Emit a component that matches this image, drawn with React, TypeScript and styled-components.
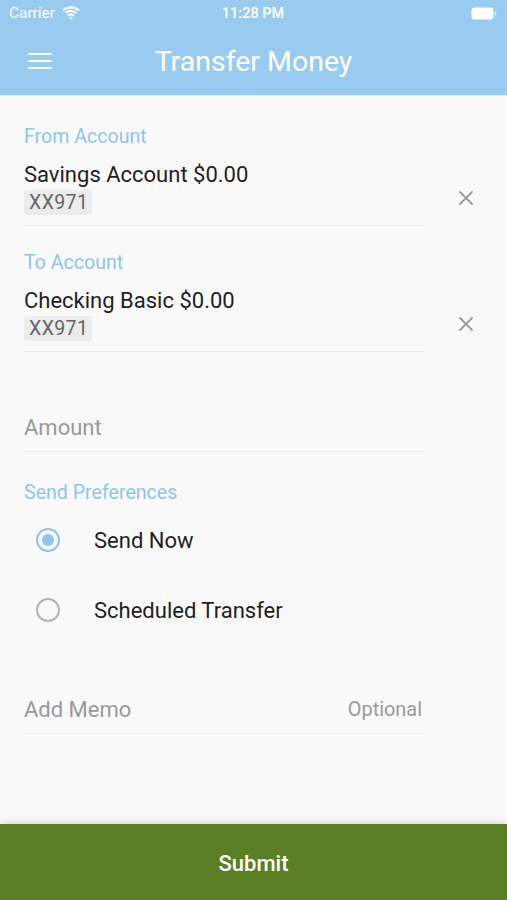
import React from "react";
import styled, { createGlobalStyle } from "styled-components";

const Global = createGlobalStyle`
  html, body { margin: 0; padding: 0; height: 100%; }
  body { font-family: Roboto, "Noto Sans", "Liberation Sans", sans-serif; background: #f9f9f9; }
  #root { height: 100%; }
`;

const Screen = styled.div`
  width: 507px;
  height: 900px;
  display: flex;
  flex-direction: column;
  background: #f9f9f9;
  overflow: hidden;
`;

const Header = styled.header`
  background: #99cbf0;
  display: flex;
  flex-direction: column;
  height: 95px;
  box-shadow: 0 1px 0 #e6eef4;
`;

const StatusBar = styled.div`
  height: 28px;
  display: grid;
  grid-template-columns: 1fr auto 1fr;
  align-items: center;
  padding: 0 10px 0 9px;
  color: #fff;
  font-size: 15.4px;
`;

const Carrier = styled.div`
  display: flex;
  align-items: center;
  gap: 7px;
  margin-top: -2px;
`;

const Time = styled.div`
  font-weight: 500;
  font-size: 14.5px;
  margin-top: -2px;
`;

const Battery = styled.div`
  justify-self: end;
  display: flex;
  align-items: center;
  margin-top: -2px;
`;

const NavBar = styled.div`
  flex: 1;
  display: grid;
  grid-template-columns: 80px 1fr 80px;
  align-items: center;
`;

const MenuButton = styled.div`
  display: flex;
  flex-direction: column;
  gap: 4.5px;
  padding-left: 28px;
  margin-top: -1px;
  span {
    display: block;
    width: 24px;
    height: 2.5px;
    border-radius: 1.5px;
    background: #fff;
  }
`;

const Title = styled.h1`
  margin: 0;
  text-align: center;
  color: #fff;
  font-weight: 400;
  font-size: 28.5px;
  margin-top: -1px;
`;

const Content = styled.main`
  flex: 1;
  padding-top: 30px;
  display: flex;
  flex-direction: column;
`;

const SectionLabel = styled.div<{ $mt?: number }>`
  margin-left: 24px;
  color: #8ec5ed;
  font-size: 19.6px;
  line-height: 24px;
  margin-top: ${(p) => p.$mt ?? 0}px;
`;

const AccountRow = styled.div`
  display: flex;
  align-items: center;
  margin-top: 13px;
`;

const AccountInfo = styled.div`
  width: 400px;
  margin-left: 24px;
  padding-bottom: 10px;
  border-bottom: 1px solid #ececec;
`;

const AccountName = styled.div`
  font-size: 22px;
  line-height: 26px;
  color: #1f1f1f;
`;

const Chip = styled.span`
  display: inline-block;
  margin-top: 2px;
  height: 25px;
  line-height: 25px;
  padding: 0 4px 0 5px;
  background: #ececec;
  border-radius: 3px;
  color: #666;
  font-size: 19.5px;
  letter-spacing: 0.4px;
`;

const Clear = styled.div`
  flex: 1;
  display: flex;
  justify-content: center;
  padding-top: 8px;
`;

const Field = styled.div<{ $mt: number }>`
  margin: ${(p) => p.$mt}px 0 0 24px;
  width: 400px;
  padding-bottom: 10px;
  border-bottom: 1px solid #ececec;
  display: flex;
  justify-content: space-between;
  align-items: center;
`;

const Placeholder = styled.span`
  font-size: 22px;
  line-height: 26px;
  color: #9a9a9a;
`;

const Hint = styled.span`
  font-size: 19.9px;
  line-height: 26px;
  color: #9a9a9a;
  margin-right: 2px;
`;

const RadioGroup = styled.div`
  display: flex;
  flex-direction: column;
`;

const RadioRow = styled.label`
  height: 70px;
  display: flex;
  align-items: center;
  padding-left: 36px;
`;

const RadioCircle = styled.span<{ $checked?: boolean }>`
  width: 24px;
  height: 24px;
  box-sizing: border-box;
  border-radius: 50%;
  border: 2px solid ${(p) => (p.$checked ? "#8ec5ed" : "#b3b3b3")};
  display: flex;
  align-items: center;
  justify-content: center;
  &::after {
    content: "";
    display: ${(p) => (p.$checked ? "block" : "none")};
    width: 12px;
    height: 12px;
    border-radius: 50%;
    background: #8ec5ed;
  }
`;

const RadioText = styled.span`
  margin-left: 34px;
  font-size: 22px;
  color: #1f1f1f;
`;

const Footer = styled.button`
  height: 76px;
  border: none;
  background: #5b7f25;
  color: #fff;
  font-family: inherit;
  font-size: 22px;
  font-weight: 500;
  box-shadow: 0 -2px 6px rgba(0, 0, 0, 0.12);
  padding: 0;
  padding-top: 2px;
`;

const Wifi = () => (
  <svg width="18" height="14" viewBox="0 0 17 13">
    <path d="M8.5 2.2c2.6 0 5 1 6.8 2.7l1.3-1.4C14.5 1.5 11.6.2 8.5.2S2.5 1.5.4 3.5l1.3 1.4C3.5 3.2 5.9 2.2 8.5 2.2z" fill="#fff" />
    <path d="M8.5 5.6c1.7 0 3.2.6 4.4 1.7l1.3-1.4C12.7 4.5 10.7 3.6 8.5 3.6S4.3 4.5 2.8 5.9l1.3 1.4c1.2-1.1 2.7-1.7 4.4-1.7z" fill="#fff" />
    <path d="M8.5 8.9c.8 0 1.5.3 2.1.8l1.3-1.4C11 7.5 9.8 7 8.5 7S6 7.5 5.1 8.3l1.3 1.4c.6-.5 1.3-.8 2.1-.8z" fill="#fff" />
    <path d="M8.5 12.6l1.6-1.7c-.4-.4-1-.6-1.6-.6s-1.2.2-1.6.6z" fill="#fff" />
  </svg>
);

const BatteryIcon = () => (
  <svg width="26" height="13" viewBox="0 0 26 13">
    <rect x="0.5" y="0.5" width="22" height="12" rx="3" fill="#fff" />
    <rect x="23.5" y="4.5" width="1.8" height="4" rx="0.9" fill="#fff" opacity="0.6" />
  </svg>
);

const CloseIcon = () => (
  <svg width="14" height="14" viewBox="0 0 14 14">
    <path d="M1 1L13 13M13 1L1 13" stroke="#9b9b9b" strokeWidth="1.8" strokeLinecap="round" />
  </svg>
);

const accounts = [
  { label: "From Account", name: "Savings Account $0.00", num: "XX971", mt: 0 },
  { label: "To Account", name: "Checking Basic $0.00", num: "XX971", mt: 25 },
];

export default function App() {
  return (
    <>
      <Global />
      <Screen>
        <Header>
          <StatusBar>
            <Carrier>
              Carrier <Wifi />
            </Carrier>
            <Time>11:28 PM</Time>
            <Battery>
              <BatteryIcon />
            </Battery>
          </StatusBar>
          <NavBar>
            <MenuButton>
              <span />
              <span />
              <span />
            </MenuButton>
            <Title>Transfer Money</Title>
            <div />
          </NavBar>
        </Header>
        <Content>
          {accounts.map((a) => (
            <React.Fragment key={a.label}>
              <SectionLabel $mt={a.mt}>{a.label}</SectionLabel>
              <AccountRow>
                <AccountInfo>
                  <AccountName>{a.name}</AccountName>
                  <Chip>{a.num}</Chip>
                </AccountInfo>
                <Clear>
                  <CloseIcon />
                </Clear>
              </AccountRow>
            </React.Fragment>
          ))}
          <Field $mt={63}>
            <Placeholder>Amount</Placeholder>
          </Field>
          <SectionLabel $mt={29}>Send Preferences</SectionLabel>
          <RadioGroup>
            <RadioRow>
              <RadioCircle $checked />
              <RadioText>Send Now</RadioText>
            </RadioRow>
            <RadioRow>
              <RadioCircle />
              <RadioText>Scheduled Transfer</RadioText>
            </RadioRow>
          </RadioGroup>
          <Field $mt={52}>
            <Placeholder>Add Memo</Placeholder>
            <Hint>Optional</Hint>
          </Field>
        </Content>
        <Footer>Submit</Footer>
      </Screen>
    </>
  );
}
